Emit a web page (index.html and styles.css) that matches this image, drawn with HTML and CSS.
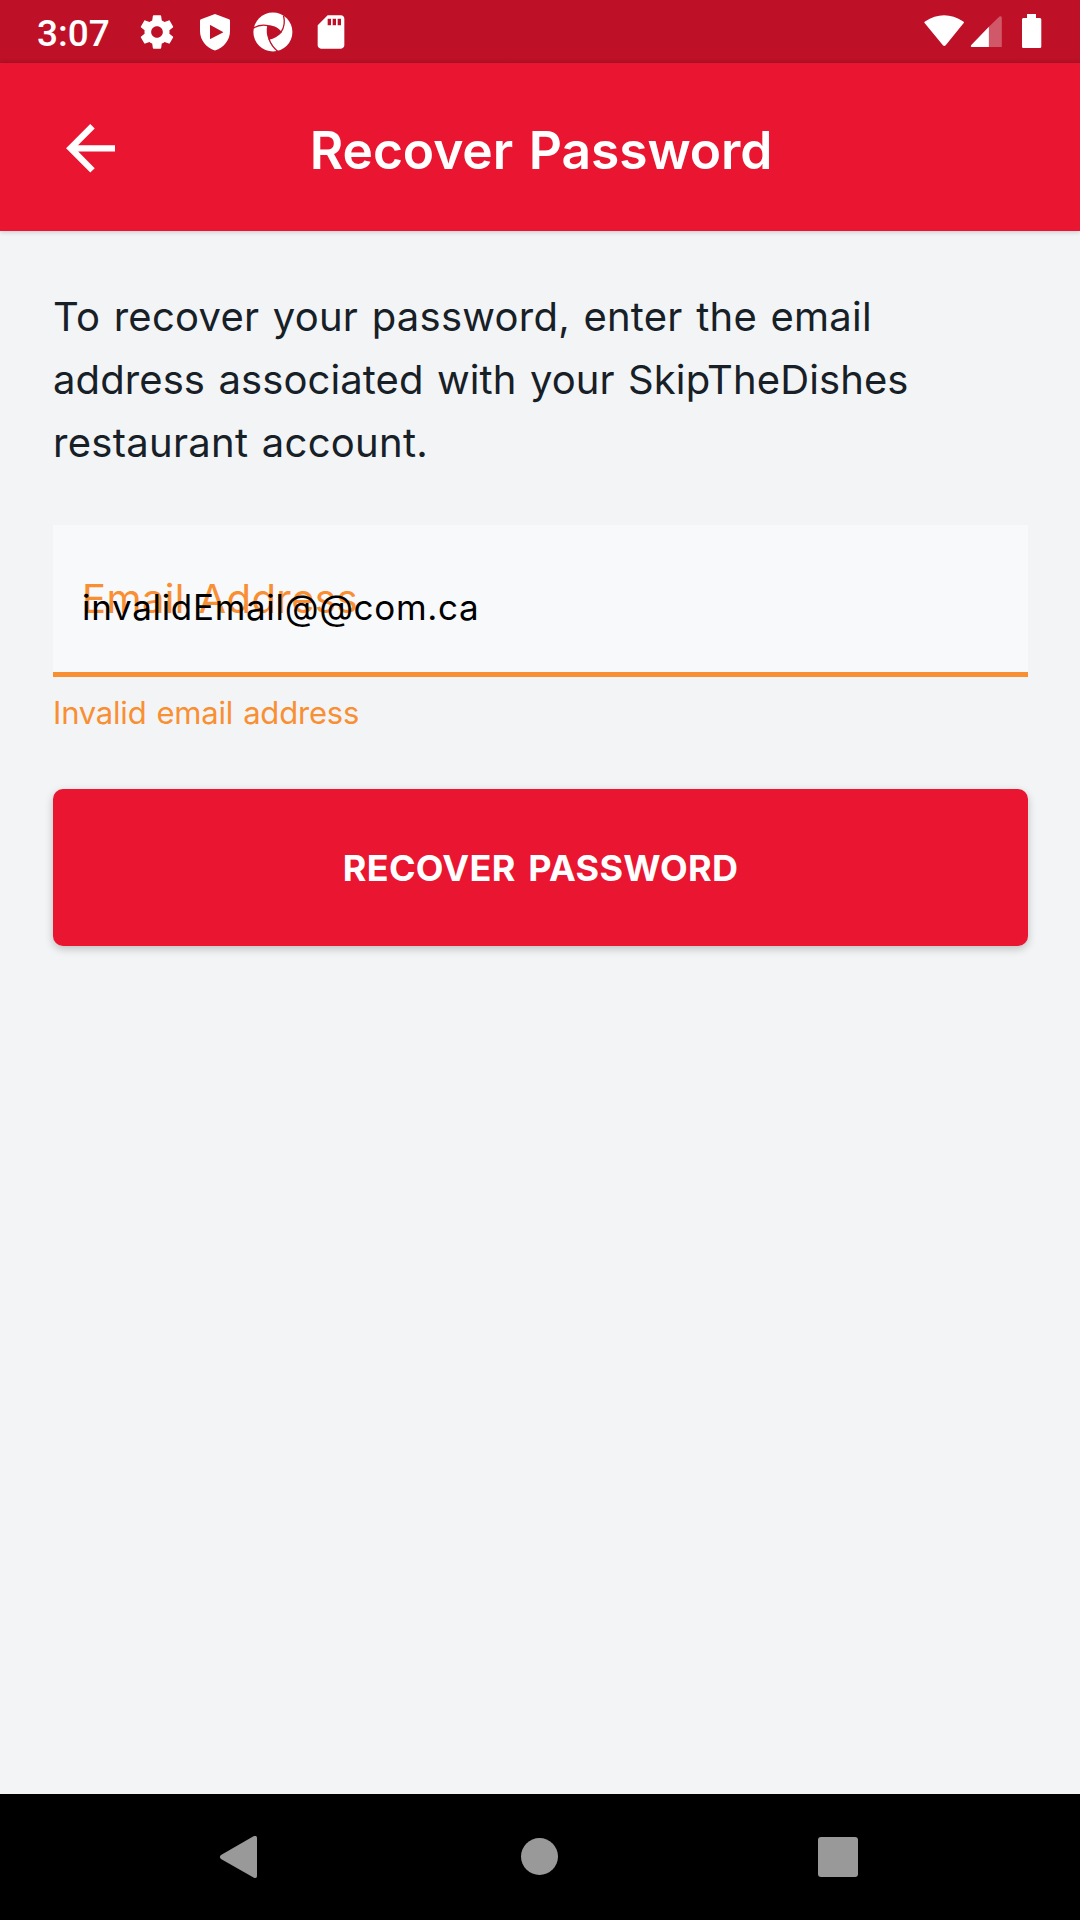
FILE: index.html
```
<!DOCTYPE html>
<html lang="en">
<head>
<meta charset="utf-8">
<title>Recover Password</title>
<link rel="stylesheet" href="styles.css">
</head>
<body>
<div class="screen">
  <div class="status-bar">
    <span class="clock">3:07</span>
    <div class="notifications">
      <svg class="icon" viewBox="0 0 24 24"><path d="M19.43 12.98c.04-.32.07-.64.07-.98s-.03-.66-.07-.98l2.11-1.65c.19-.15.24-.42.12-.64l-2-3.46c-.12-.22-.39-.3-.61-.22l-2.49 1c-.52-.4-1.08-.73-1.69-.98l-.38-2.65C14.46 2.18 14.25 2 14 2h-4c-.25 0-.46.18-.49.42l-.38 2.65c-.61.25-1.17.59-1.69.98l-2.49-1c-.23-.09-.49 0-.61.22l-2 3.46c-.13.22-.07.49.12.64l2.11 1.65c-.04.32-.07.65-.07.98s.03.66.07.98l-2.11 1.65c-.19.15-.24.42-.12.64l2 3.46c.12.22.39.3.61.22l2.49-1c.52.4 1.08.73 1.69.98l.38 2.65c.03.24.24.42.49.42h4c.25 0 .46-.18.49-.42l.38-2.65c.61-.25 1.17-.59 1.69-.98l2.49 1c.23.09.49 0 .61-.22l2-3.46c.12-.22.07-.49-.12-.64l-2.11-1.65zM12 15.5c-1.93 0-3.5-1.57-3.5-3.5s1.57-3.5 3.5-3.5 3.5 1.57 3.5 3.5-1.57 3.5-3.5 3.5z"/></svg>
      <svg class="icon" viewBox="0 0 40 40"><path fill-rule="evenodd" d="M20 2 34 7.2Q35 7.6 35 8.8V19C35 28 29 35.500 20 38.500C11 35.500 5 28 5 19V8.800Q5 7.600 6 7.200ZM15 13.200V27Q15 27.200 15.300 27L28 20.500Q28.400 20.200 28 19.900L15.300 13.100Z"/></svg>
      <svg class="icon" viewBox="0 0 40 40"><circle cx="19.900" cy="20" r="19.500"/><g class="cut"><path class="hole" d="M14.800 14.200Q22.500 14.200 28 20.200Q23 25.500 16 27Q13.500 20.500 14.800 14.200Z"/><path d="M0 16.200Q7 12 15 13.600Q23.500 14.300 28 20.200"/><path d="M28 20.200Q33 13 30.500 3.500"/><path d="M16 27Q18.500 34.500 25.500 40"/></g></svg>
      <svg class="icon" viewBox="0 0 24 24"><path d="M18 2h-8L4.020 8 4 20c0 1.100.9 2 2 2h12c1.100 0 2-.9 2-2V4c0-1.100-.9-2-2-2zm-6 6h-2V4h2v4zm3 0h-2V4h2v4zm3 0h-2V4h2v4z"/></svg>
    </div>
    <svg class="system" viewBox="0 0 118 36"><path d="M.8 9.300Q-.2 8.300 1 7.400Q20 -5 39.300 7.400Q40.500 8.300 39.500 9.300L21.700 31.300Q20.300 32.700 18.900 31.300Z"/><path d="M64.900 12.700V33H47.500Q46 32.300 47.300 31Z"/><path class="dim" d="M64.900 12.700 75.500 2.500Q77.800 1.500 77.800 4V33H64.900Z"/><path d="M103 0H112V4H116Q117.300 4 117.300 5.500V32.500Q117.300 34 116 34H99.300Q98 34 98 32.500V5.500Q98 4 99.300 4H103Z"/></svg>
  </div>
  <header class="app-bar">
    <svg class="back" viewBox="0 0 49 49"><path d="M26.500 2.200 4.500 24.300 26.500 46.400M4.500 24.300H49"/></svg>
    <h1 class="title">Recover Password</h1>
  </header>
  <main class="content">
    <p class="intro"><span class="line line-one">To recover your password, enter the email</span> <span class="line line-two">address associated with your SkipTheDishes</span> <span class="line line-three">restaurant account.</span></p>
    <div class="field">
      <label class="label">Email Address</label>
      <span class="value">invalidEmail@@com.ca</span>
    </div>
    <p class="error">Invalid email address</p>
    <button class="submit">RECOVER PASSWORD</button>
  </main>
  <nav class="nav-bar">
    <svg class="key" viewBox="0 0 42 42"><path d="M34.500 .3Q38 -1 38 2V40Q38 43 34.500 41.500L2 23Q-.2 21 2 19Z"/></svg>
    <svg class="key" viewBox="0 0 42 42"><circle cx="21.500" cy="20.500" r="18.500"/></svg>
    <svg class="key" viewBox="0 0 42 42"><rect x="1" y="1" width="40" height="40" rx="3"/></svg>
  </nav>
</div>
</body>
</html>
```
FILE: styles.css
```
body {
  margin: 0;
  font-family: Inter, "Noto Sans", sans-serif;
}

.screen {
  width: 1080px;
  height: 1920px;
  display: flex;
  flex-direction: column;
  overflow: hidden;
  background: #f2f4f6;
}

.status-bar {
  height: 63px;
  display: flex;
  align-items: flex-start;
  box-sizing: border-box;
  padding: 11px 38px 0 37px;
  background: linear-gradient(#be1128 58px, #b41026 63px);
  color: #fff;
}

.clock {
  width: 100px;
  margin-top: 1px;
  font: 500 37px/44px Roboto, sans-serif;
}

.notifications {
  display: flex;
  gap: 18px;
  margin-top: 1px;
}

.icon {
  width: 40px;
  height: 40px;
  fill: #fff;
}

.cut {
  fill: none;
  stroke: #be1128;
  stroke-width: 1.3;
}

.hole {
  fill: #be1128;
}

.system {
  width: 118px;
  height: 36px;
  margin: 3px 0 0 auto;
  fill: #fff;
}

.dim {
  opacity: .3;
}

.app-bar {
  height: 168px;
  flex: none;
  display: grid;
  grid-template-columns: 66px 1fr 66px;
  box-sizing: border-box;
  padding: 0 64px 0 66px;
  background: #ea1530;
  color: #fff;
  box-shadow: 0 1px 5px rgba(0, 0, 0, .18);
}

.back {
  width: 49px;
  height: 49px;
  margin-top: 61px;
  fill: none;
  stroke: #fff;
  stroke-width: 6.3;
}

.title {
  margin: 56px 0 0;
  font-size: 51.5px;
  font-weight: 600;
  line-height: 62px;
  letter-spacing: -.1px;
  word-spacing: 3px;
  text-align: center;
}

.content {
  flex: 1;
  padding: 54px 52px 0 53px;
}

.intro {
  margin: 0 0 51px;
  color: #172026;
  font-size: 40px;
  line-height: 63px;
  word-spacing: 2px;
}

.line {
  display: block;
}

.line-one {
  letter-spacing: .25px;
}

.line-two {
  letter-spacing: .1px;
}

.line-three {
  letter-spacing: .28px;
}

.field {
  height: 147px;
  display: grid;
  align-items: start;
  padding: 0 29px;
  border-bottom: 5px solid #f98f33;
  background: #f8f9fb;
}

.label,
.value {
  grid-area: 1 / 1;
}

.label {
  margin-top: 50px;
  color: #f98f33;
  font-size: 40px;
  line-height: 48px;
  letter-spacing: .4px;
  word-spacing: 2px;
}

.value {
  margin-top: 61px;
  color: #000;
  font-size: 35px;
  line-height: 43px;
  letter-spacing: .68px;
}

.error {
  margin: 16px 0 57px;
  color: #f98f33;
  font-size: 31px;
  line-height: 39px;
  letter-spacing: -.2px;
  word-spacing: 1.5px;
}

.submit {
  display: block;
  width: 100%;
  height: 157px;
  padding: 0;
  border: 0;
  border-radius: 10px;
  background: #ea1530;
  color: #fff;
  font: 700 36px/44px Inter, "Noto Sans", sans-serif;
  letter-spacing: .27px;
  word-spacing: 4px;
  box-shadow: 0 3px 8px rgba(0, 0, 0, .22);
}

.nav-bar {
  height: 126px;
  display: flex;
  justify-content: space-between;
  align-items: center;
  box-sizing: border-box;
  padding: 0 221px 0 219px;
  background: #000;
}

.key {
  width: 42px;
  height: 42px;
  fill: #999;
}
```
